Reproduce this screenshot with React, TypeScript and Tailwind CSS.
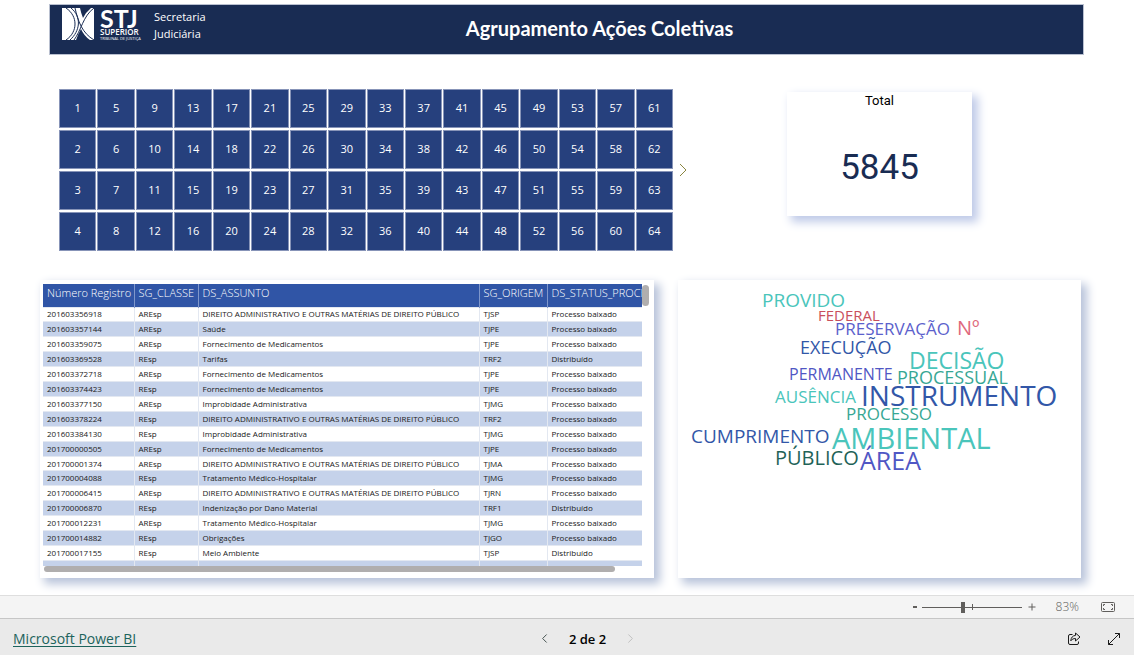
import { ChevronRight, ChevronLeft } from "lucide-react";

const groups = Array.from({ length: 64 }, (_, i) => i + 1);

const PUBLIC_LAW = "DIREITO ADMINISTRATIVO E OUTRAS MATÉRIAS DE DIREITO PÚBLICO";

const rows: string[][] = [
  ["201603356918", "AREsp", PUBLIC_LAW, "TJSP", "Processo baixado"],
  ["201603357144", "AREsp", "Saúde", "TJPE", "Processo baixado"],
  ["201603359075", "AREsp", "Fornecimento de Medicamentos", "TJPE", "Processo baixado"],
  ["201603369528", "REsp", "Tarifas", "TRF2", "Distribuído"],
  ["201603372718", "AREsp", "Fornecimento de Medicamentos", "TJPE", "Processo baixado"],
  ["201603374423", "REsp", "Fornecimento de Medicamentos", "TJPE", "Processo baixado"],
  ["201603377150", "AREsp", "Improbidade Administrativa", "TJMG", "Processo baixado"],
  ["201603378224", "REsp", PUBLIC_LAW, "TRF2", "Processo baixado"],
  ["201603384130", "REsp", "Improbidade Administrativa", "TJMG", "Processo baixado"],
  ["201700000505", "AREsp", "Fornecimento de Medicamentos", "TJPE", "Processo baixado"],
  ["201700001374", "AREsp", PUBLIC_LAW, "TJMA", "Processo baixado"],
  ["201700004088", "REsp", "Tratamento Médico-Hospitalar", "TJMG", "Processo baixado"],
  ["201700006415", "AREsp", PUBLIC_LAW, "TJRN", "Processo baixado"],
  ["201700006870", "REsp", "Indenização por Dano Material", "TRF1", "Distribuído"],
  ["201700012231", "AREsp", "Tratamento Médico-Hospitalar", "TJMG", "Processo baixado"],
  ["201700014882", "REsp", "Obrigações", "TJGO", "Processo baixado"],
  ["201700017155", "REsp", "Meio Ambiente", "TJSP", "Distribuído"],
  ["201700017256", "AREsp", "Meio Ambiente", "TJSP", "Processo baixado"],
];

const columns = ["Número Registro", "SG_CLASSE", "DS_ASSUNTO", "SG_ORIGEM", "DS_STATUS_PROCESSO"];

const words = [
  { text: "PROVIDO", style: "left-[84px] top-[11px] text-[19px] text-[#4ac5bb]" },
  { text: "FEDERAL", style: "left-[140px] top-[28px] text-[15px] text-[#c94f5c]" },
  { text: "PRESERVAÇÃO", style: "left-[157px] top-[40px] text-[17px] text-[#5b61cc]" },
  { text: "Nº", style: "left-[279px] top-[38px] text-[20px] text-[#e0687c]" },
  { text: "EXECUÇÃO", style: "left-[122px] top-[58px] text-[18px] text-[#3257a8]" },
  { text: "DECISÃO", style: "left-[231px] top-[69px] text-[23px] text-[#4ac5bb]" },
  { text: "PERMANENTE", style: "left-[111px] top-[86px] text-[16px] text-[#5057c4]" },
  { text: "PROCESSUAL", style: "left-[219px] top-[88px] text-[18px] text-[#37a794]" },
  { text: "AUSÊNCIA", style: "left-[97px] top-[108px] text-[17px] text-[#4ac5bb]" },
  { text: "INSTRUMENTO", style: "left-[183px] top-[101px] text-[28px] text-[#3257a8]" },
  { text: "PROCESSO", style: "left-[168px] top-[125px] text-[17px] text-[#37a794]" },
  { text: "CUMPRIMENTO", style: "left-[13px] top-[147px] text-[19px] text-[#3257a8]" },
  { text: "AMBIENTAL", style: "left-[154px] top-[143px] text-[29px] text-[#4ac5bb]" },
  { text: "PÚBLICO", style: "left-[97px] top-[168px] text-[20px] text-[#1f6358]" },
  { text: "ÁREA", style: "left-[182px] top-[168px] text-[25px] text-[#5057c4]" },
];

function StjMark() {
  return (
    <svg viewBox="0 0 32 32" className="h-8 w-8" aria-hidden="true">
      <path d="M0 0H32V32H0Z" fill="#fff" />
      <path d="M18 0H29Q24 4 21 10Q19 5 18 0Z" fill="#192c53" />
      <path d="M19 21Q16 26 14 32H28Q22 28 19 21Z" fill="#192c53" />
      <path d="M4 0C16 8 16 24 4 32M9 0C20 9 18 23 8 32" fill="none" stroke="#192c53" strokeWidth="1" />
      <path d="M13 0C16 13 20 25 32 32M32 0C21 8 19 23 12 32" fill="none" stroke="#192c53" strokeWidth="1" />
    </svg>
  );
}

function Header() {
  return (
    <header className="-mr-[3px] ml-[9px] grid h-[51px] grid-cols-[415fr_auto_349fr] items-start border border-[#b9c0d0] bg-[#192c53] text-white">
      <div className="flex pl-3 pt-[3px]">
        <StjMark />
        <div className="ml-1.5 flex w-[38px] flex-col">
          <span className="font-['Lato',sans-serif] text-[25px] font-bold leading-5">STJ</span>
          <span className="font-['Open_Sans',sans-serif] text-[8px] font-semibold leading-[8px]">SUPERIOR</span>
          <span className="whitespace-nowrap font-['Open_Sans',sans-serif] text-[4px] leading-[5px]">TRIBUNAL DE JUSTIÇA</span>
        </div>
        <p className="ml-4 font-['Open_Sans',sans-serif] text-[11px] font-medium leading-[17px]">
          Secretaria
          <br />
          Judiciária
        </p>
      </div>
      <h1 className="whitespace-nowrap pt-2 font-['Lato',sans-serif] text-[20px] font-bold leading-[30px]">
        Agrupamento Ações Coletivas
      </h1>
    </header>
  );
}

function GroupSlicer() {
  return (
    <div className="flex flex-1 items-center">
      <div className="grid flex-1 grid-flow-col grid-cols-[repeat(16,minmax(0,1fr))] grid-rows-4 gap-x-px gap-y-0.5">
        {groups.map((n) => (
          <button
            key={n}
            type="button"
            className="h-[39px] border border-[#8794b8] bg-[#26407d] font-['Open_Sans',sans-serif] text-[11px] text-white"
          >
            {n}
          </button>
        ))}
      </div>
      <button type="button" aria-label="Próximos grupos" className="ml-1 mr-[98px] flex w-3 justify-center">
        <svg viewBox="0 0 8 14" className="h-3.5 w-2" fill="none" stroke="#8a8540" aria-hidden="true">
          <path d="M1 1L7 7L1 13" />
        </svg>
      </button>
    </div>
  );
}

function TotalCard() {
  return (
    <section className="mt-[3px] flex h-[124px] w-[185px] flex-col items-center bg-white font-['Roboto',sans-serif] shadow-[5px_5px_9px_1px_#bfcae8]">
      <h2 className="pt-px text-[13px] leading-4 text-black">Total</h2>
      <p className="mt-[37px] text-[35px] leading-[44px] text-[#192c53]">5845</p>
    </section>
  );
}

function ProcessTable() {
  return (
    <section className="min-w-0 bg-white pb-1.5 pl-[3px] pr-[5px] pt-1 shadow-[5px_5px_9px_1px_#b8c3da]">
      <div className="flex h-[282px] font-['Open_Sans',sans-serif]">
        <div className="min-w-0 flex-1 overflow-hidden">
          <table className="h-[291px] w-full min-w-[640px] table-fixed border-collapse text-left">
            <colgroup>
              <col className="w-[91px]" />
              <col className="w-[64px]" />
              <col className="w-[281px]" />
              <col className="w-[68px]" />
              <col />
            </colgroup>
            <thead>
              <tr className="h-[23px] bg-[#3055a6] text-[11px] leading-4 text-white">
                {columns.map((c) => (
                  <th key={c} scope="col" className="whitespace-nowrap border-r border-[#7f97cb] py-0 pb-1 pl-1 font-light">
                    {c}
                  </th>
                ))}
              </tr>
            </thead>
            <tbody>
              {rows.map((row) => (
                <tr key={row[0]} className="text-[8px] leading-[12px] text-[#202020] even:bg-[#c5d2ea]">
                  {row.map((cell, i) => (
                    <td key={i} className="whitespace-nowrap border-r border-t border-[#e3e8f1] py-0 pl-1">
                      {cell}
                    </td>
                  ))}
                </tr>
              ))}
            </tbody>
          </table>
        </div>
        <div className="w-[7px] pt-px">
          <div className="h-[21px] rounded-full bg-[#b0aeae]" />
        </div>
      </div>
      <div className="h-1.5 pl-px pr-[34px]">
        <div className="h-full rounded-full bg-[#b0aeae]" />
      </div>
    </section>
  );
}

function WordCloud() {
  return (
    <section className="relative bg-white font-['Open_Sans',sans-serif] shadow-[5px_5px_9px_1px_#b8c3da]">
      {words.map((w) => (
        <span key={w.text} className={`absolute whitespace-nowrap leading-none ${w.style}`}>
          {w.text}
        </span>
      ))}
    </section>
  );
}

function ZoomBar() {
  return (
    <div className="flex h-6 items-center justify-end border-y border-b-[#c6c6c6] border-t-[#dedede] bg-[#f4f4f4] pr-[19px] text-[#605e5c]">
      <button type="button" aria-label="Reduzir" className="flex w-2 justify-center">
        <span className="h-[2px] w-1 bg-[#605e5c]" />
      </button>
      <div className="relative mx-[3px] flex w-[100px] items-center">
        <span className="absolute left-[50px] h-1.5 w-px bg-[#605e5c]" />
        <input
          type="range"
          min={0}
          max={100}
          defaultValue={41}
          aria-label="Zoom"
          className="h-4 w-full appearance-none bg-transparent [&::-webkit-slider-runnable-track]:h-px [&::-webkit-slider-runnable-track]:bg-[#605e5c] [&::-webkit-slider-thumb]:-mt-[5px] [&::-webkit-slider-thumb]:h-[11px] [&::-webkit-slider-thumb]:w-1 [&::-webkit-slider-thumb]:appearance-none [&::-webkit-slider-thumb]:bg-[#605e5c]"
        />
      </div>
      <button type="button" aria-label="Ampliar" className="ml-[3px] flex w-2 justify-center">
        <svg viewBox="0 0 8 8" className="h-2 w-2" stroke="currentColor" aria-hidden="true">
          <path d="M0.500 4H7.500M4 0.500V7.500" />
        </svg>
      </button>
      <span className="ml-5 font-['Open_Sans',sans-serif] text-[12px] font-light leading-4">83%</span>
      <button type="button" aria-label="Ajustar à página" className="ml-[22px]">
        <svg viewBox="0 0 14 10" className="h-2.5 w-3.5" fill="none" stroke="currentColor" aria-hidden="true">
          <rect x="0.500" y="0.500" width="13" height="9" rx="1" />
          <path d="M4 2.500H2.500V4M10 2.500H11.500V4M4 7.500H2.500V6M10 7.500H11.500V6" />
        </svg>
      </button>
    </div>
  );
}

function Footer() {
  return (
    <footer className="grid h-9 grid-cols-3 items-center bg-[#eaeaea] pl-[13px] pr-[14px] pt-[3px] font-['Open_Sans',sans-serif]">
      <a href="#" className="justify-self-start text-[14px] leading-5 text-[#1c635c] underline underline-offset-2">
        Microsoft Power BI
      </a>
      <nav className="ml-[42px] flex items-center justify-self-center text-black" aria-label="Páginas">
        <button type="button" aria-label="Página anterior">
          <ChevronLeft size={15} strokeWidth={1.5} className="text-[#3c4a47]" />
        </button>
        <span className="mx-[17px] text-[13px] font-semibold leading-5">2 de 2</span>
        <button type="button" aria-label="Próxima página">
          <ChevronRight size={15} strokeWidth={1.5} className="text-[#bdbdbd]" />
        </button>
      </nav>
      <div className="flex items-center gap-[27px] justify-self-end text-[#1b1b1b]">
        <button type="button" aria-label="Compartilhar">
          <svg viewBox="0 0 14 14" className="h-3.5 w-3.5" fill="none" stroke="currentColor" strokeLinejoin="round" aria-hidden="true">
            <path d="M5.500 2.500H3A1.500 1.500 0 0 0 1.500 4V11A1.500 1.500 0 0 0 3 12.500H10A1.500 1.500 0 0 0 11.500 11V9.500" />
            <path d="M8.500 1L13 5L8.500 9V6.500C6.500 6.500 5 7.200 3.800 8.800C4 5.500 5.800 3.600 8.500 3.400Z" />
          </svg>
        </button>
        <button type="button" aria-label="Tela inteira">
          <svg viewBox="0 0 12 12" className="h-3 w-3" fill="none" stroke="currentColor" aria-hidden="true">
            <path d="M0.500 11.500L11.500 0.500M7 0.500H11.500V5M0.500 7V11.500H5" />
          </svg>
        </button>
      </div>
    </footer>
  );
}

export default function App() {
  return (
    <div className="flex min-h-screen flex-col bg-white">
      <main className="flex-1 pb-[17px] pl-10 pr-[53px] pt-1">
        <Header />
        <div className="mt-[34px] flex items-start pl-[19px] pr-[109px]">
          <GroupSlicer />
          <TotalCard />
        </div>
        <div className="mt-[29px] grid grid-cols-[614fr_403fr] gap-6">
          <ProcessTable />
          <WordCloud />
        </div>
      </main>
      <ZoomBar />
      <Footer />
    </div>
  );
}
